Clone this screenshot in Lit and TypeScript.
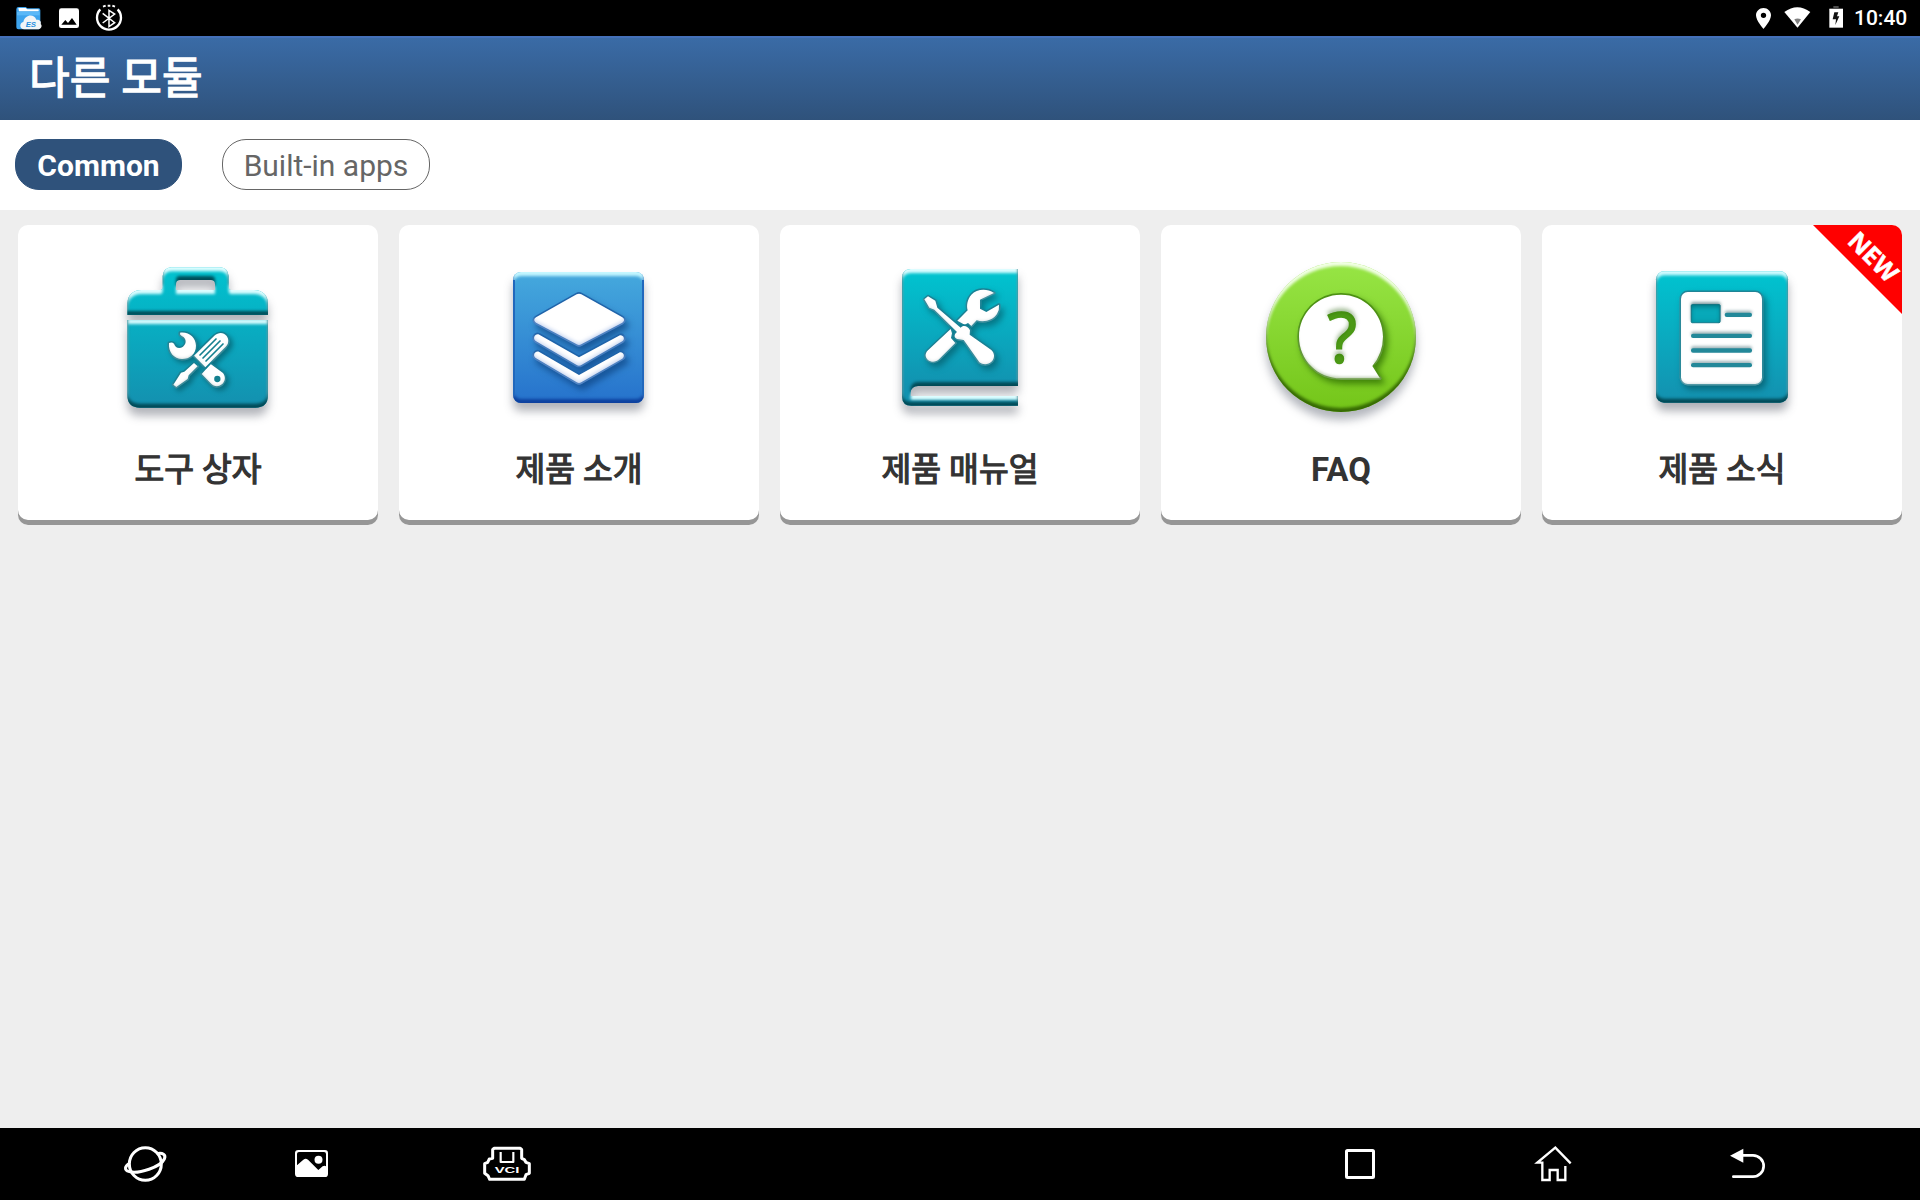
import { LitElement, html, svg, css, nothing } from "lit";
import { customElement, property } from "lit/decorators.js";

/* Bevelled look: light inner edge on top, dark inner edge at the bottom, soft drop shadow. */
const bevel = (id: string, hi: string, hiO: number, lo: string, loO: number, drop: string, dropO: number, d = 11, b = 5.5, dy = 24, db = 14, dx = 0) => svg`
  <filter id=${id} x="-30%" y="-30%" width="160%" height="170%" color-interpolation-filters="sRGB">
    <feOffset in="SourceAlpha" dx=${dx} dy=${dy} result="o" />
    <feGaussianBlur in="o" stdDeviation=${db} result="ob" />
    <feFlood flood-color=${drop} flood-opacity=${dropO} />
    <feComposite in2="ob" operator="in" result="shadow" />
    <feOffset in="SourceAlpha" dy=${d} />
    <feGaussianBlur stdDeviation=${b} result="t" />
    <feComposite in="SourceAlpha" in2="t" operator="out" result="tm" />
    <feFlood flood-color=${hi} flood-opacity=${hiO} />
    <feComposite in2="tm" operator="in" result="top" />
    <feOffset in="SourceAlpha" dy=${-d} />
    <feGaussianBlur stdDeviation=${b} result="u" />
    <feComposite in="SourceAlpha" in2="u" operator="out" result="um" />
    <feFlood flood-color=${lo} flood-opacity=${loO} />
    <feComposite in2="um" operator="in" result="bottom" />
    <feMerge>
      <feMergeNode in="shadow" /><feMergeNode in="SourceGraphic" /><feMergeNode in="top" /><feMergeNode in="bottom" />
    </feMerge>
  </filter>`;

const gradient = (id: string, y1: number, y2: number, a: string, b: string) => svg`
  <linearGradient id=${id} gradientUnits="userSpaceOnUse" x1="0" x2="0" y1=${y1} y2=${y2}>
    <stop offset="0" stop-color=${a} /><stop offset="1" stop-color=${b} />
  </linearGradient>`;

const toolbox = html`<svg width="200" height="190" viewBox="-6 0 600 570">
  <defs>
    ${bevel("base", "#dcfdff", 1, "#004652", 0.95, "#2a3040", 0.36)}
    ${bevel("tool", "#ffffff", 0, "#8ba5a8", 0.45, "#04505e", 0.6, 6, 4, 10, 8, 8)}
    ${gradient("g", 90, 500, "#00c2cf", "#1490af")}
  </defs>
  <path filter="url(#base)" fill="url(#g)" fill-rule="evenodd" d="M82 225V190Q84 152 124 150H178Q188 150 188 140V108Q190 84 214 82H360Q384 84 386 108V140Q386 150 396 150H462Q502 152 504 190V225ZM228 150H345V132Q345 120 333 120H240Q228 120 228 132ZM82 240H504V465Q504 503 466 503H120Q82 503 82 465Z" />
  <g filter="url(#tool)">
    <g fill="#fff" stroke="#147f92" stroke-width="9" stroke-linejoin="round" paint-order="stroke">
      <path d="M240 278C266 274 288 292 288 317C288 342 270 357 246 357C222 357 204 336 207 309Q216 305 222 311C226 324 238 327 249 320C261 311 259 294 246 289Q238 284 240 278Z" />
      <path d="M332 372L369 399C378 410 376 424 366 433C355 442 341 440 332 430L305 402Z" />
      <path d="M282 347L343 287C356 276 371 277 380 288C388 299 386 312 376 322L316 382Z" />
      <path d="M282 369L293 379L266 406L263 417L229 441L220 434L243 398L253 395Z" />
    </g>
    <circle cx="352" cy="417" r="9.5" fill="#14808f" />
    <path d="M300 345L348 297M309 354L360 303M318 363L369 312" stroke="#14808f" stroke-width="5" stroke-linecap="round" fill="none" />
  </g>
</svg>`;

const layers = html`<svg width="200" height="190" viewBox="-3 0 600 570">
  <defs>
    ${bevel("base", "#c4f7ff", 1, "#0c3e9c", 0.95, "#2a3040", 0.36)}
    ${bevel("tool", "#ffffff", 0, "#88a6e0", 0.6, "#0a3f7c", 0.65, 8, 6, 14, 10, 10)}
    ${gradient("g", 96, 490, "#45a9dd", "#2672cc")}
  </defs>
  <rect filter="url(#base)" x="99" y="96" width="393" height="393" rx="24" fill="url(#g)" />
  <path d="M102 120V465M489 120V465" stroke="#2168bd" stroke-width="6" fill="none" />
  <g filter="url(#tool)" stroke="#1c62a8" stroke-width="10" stroke-linejoin="round" fill="#fff" paint-order="stroke">
    <path d="M290 163Q297 159 304 163L427 232Q438 240 427 248L304 313Q297 317 290 313L168 248Q157 240 168 232Z" />
    <path d="M297 352L417 287C428 281 438 296 427 304L304 375Q297 379 290 375L167 303C156 294 166 278 178 284Z" />
    <path d="M297 405L417 338C428 332 438 347 427 356L304 427Q297 431 290 427L167 354C156 346 166 330 178 336Z" />
  </g>
</svg>`;

const manual = html`<svg width="200" height="190" viewBox="0 0 600 570">
  <defs>
    ${bevel("base", "#dcfdff", 1, "#004652", 0.95, "#2a3040", 0.36)}
    ${bevel("tool", "#ffffff", 0, "#9fb4b8", 0.4, "#04505e", 0.6, 6, 4, 11, 9, 9)}
    ${gradient("g", 90, 440, "#00c4d0", "#1292b0")}
  </defs>
  <path filter="url(#base)" fill="url(#g)" d="M474 87H152Q126 88 126 114V470Q127 497 154 497H474V468H152V458Q154 438 174 438H474Z" />
  <g filter="url(#tool)" fill="#fff" stroke="#178094" stroke-width="9" stroke-linejoin="round" paint-order="stroke">
    <path d="M402 159C380 144 350 147 334 164C322 178 319 196 323 211L292 242L314 254L324 249L334 258L350 241C374 248 400 240 411 222Q419 209 417 194L379 216L360 206V179Z" />
    <path d="M272 267L204 331C193 342 196 352 203 359C214 368 228 367 238 357L286 309L273 294L276 280Z" />
    <path d="M193 178L204 169L226 182L232 203L302 263C309 253 325 258 330 271L329 284L394 330C404 339 405 353 396 364C386 375 368 375 358 367L311 300L296 298C282 296 280 284 291 276L223 209L208 203Z" />
  </g>
</svg>`;

const faq = html`<svg width="200" height="190" viewBox="3 0 600 570">
  <defs>
    ${bevel("base", "#f2ffe6", 1, "#2f5f00", 0.9, "#2c3448", 0.36)}
    ${bevel("tool", "#ffffff", 0, "#8aa878", 0.6, "#2c6a00", 0.75, 10, 5, 12, 10, 10)}
    ${bevel("hole", "#2c6a00", 0.3, "#66c022", 0, "#1c5a00", 0.4, 5, 4, -8, 6)}
    ${gradient("g", 70, 515, "#97e545", "#74c519")}
  </defs>
  <circle filter="url(#base)" cx="303" cy="291" r="225" fill="url(#g)" />
  <path filter="url(#tool)" d="M303 164C373 164 429 220 429 290Q429 340 397 378L420 415H303C233 415 177 360 177 290S233 164 303 164Z" fill="#fff" stroke="#4d9113" stroke-width="10" stroke-linejoin="round" paint-order="stroke" />
  <text class="mark" filter="url(#hole)" x="306" y="368" text-anchor="middle">?</text>
</svg>`;

const news = html`<svg width="200" height="190" viewBox="6 90 600 570">
  <defs>
    ${bevel("base", "#d2fbff", 1, "#004652", 0.95, "#2a3040", 0.38)}
    ${bevel("tool", "#ffffff", 0, "#9db8bd", 0.5, "#04505e", 0.65, 5, 3, 12, 10, 8)}
    ${bevel("hole", "#00626e", 0.65, "#00626e", 0.2, "#06404a", 0.5, 8, 6, -6, 5)}
    ${bevel("line", "#238899", 0, "#238899", 0, "#06404a", 0.4, 4, 2, -6, 4)}
    ${gradient("g", 184, 578, "#00c4d0", "#1490af")}
  </defs>
  <rect filter="url(#base)" x="108" y="184" width="396" height="394" rx="24" fill="url(#g)" />
  <rect filter="url(#tool)" x="183" y="246" width="243" height="276" rx="20" fill="#fff" stroke="#1f8496" stroke-width="9" paint-order="stroke" />
  <rect filter="url(#hole)" x="214" y="284" width="86" height="54" rx="3" fill="#08a9b9" stroke="#1f8799" stroke-width="3" />
  <g filter="url(#line)" fill="#238899">
    <rect x="314" y="308" width="82" height="13" rx="6" />
    <rect x="213" y="371" width="183" height="13" rx="6" />
    <rect x="213" y="415" width="183" height="13" rx="6" />
    <rect x="213" y="459" width="183" height="13" rx="6" />
  </g>
</svg>`;

interface Tile { label: string; icon: unknown; fresh?: boolean; }

const TILES: Tile[] = [
  { label: "도구 상자", icon: toolbox },
  { label: "제품 소개", icon: layers },
  { label: "제품 매뉴얼", icon: manual },
  { label: "FAQ", icon: faq },
  { label: "제품 소식", icon: news, fresh: true },
];

@customElement("module-tile")
export class ModuleTile extends LitElement {
  @property({ attribute: false }) tile!: Tile;

  static styles = css`
    :host { display: block; }
    .card {
      position: relative; box-sizing: border-box; height: 300px; padding-top: 15px;
      display: flex; flex-direction: column; align-items: center;
      background: #fff; border-radius: 10px; box-shadow: inset 0 -5px 0 #969696;
    }
    svg { display: block; flex: none; overflow: visible; }
    .mark { font: 400 206px "Open Sans", sans-serif; fill: #4c9a16; stroke: #4c9a16; stroke-width: 5px; }
    .label {
      margin-top: 16px; font-size: 33px; line-height: 48px; font-weight: 700; color: #333;
      white-space: nowrap;
    }
    .cjk { font-size: 32.4px; font-weight: 400; -webkit-text-stroke: 1.2px #333; }
    .ribbon {
      position: absolute; top: 0; right: 0; width: 89px; height: 89px; background: #f00;
      border-top-right-radius: 10px; clip-path: polygon(0 0, 100% 0, 100% 100%);
    }
    .new {
      position: absolute; left: 332px; top: 31px; transform: translate(-50%, -50%) rotate(45deg);
      font: 700 25px/18px "Noto Sans", sans-serif; color: #fff; -webkit-text-stroke: 0.5px #fff;
    }
  `;

  render() {
    const { label, icon, fresh } = this.tile;
    return html`<div class="card">
      ${icon}
      <div class="label ${label === "FAQ" ? "" : "cjk"}">${label}</div>
      ${fresh ? html`<div class="ribbon"></div><span class="new">NEW</span>` : nothing}
    </div>`;
  }
}

@customElement("app-root")
export class AppRoot extends LitElement {
  static styles = css`
    :host {
      display: flex; flex-direction: column; width: 1920px; height: 1200px; overflow: hidden;
      background: #eee; font-family: Roboto, "Noto Sans CJK KR", sans-serif;
    }
    svg { display: block; flex: none; }
    .status {
      flex: none; height: 36px; background: #000; color: #fff; display: flex;
      justify-content: space-between; box-sizing: border-box; padding: 0 12px;
    }
    .side { display: flex; align-items: center; }
    .wifi { margin: 0 12px 0 6px; }
    .time { font-size: 21px; line-height: 37px; font-weight: 500; margin-left: 6px; width: 54px; white-space: nowrap; }
    .es { font: italic 700 22px "Liberation Sans", sans-serif; fill: #1e8fe0; }
    .header {
      flex: none; box-sizing: border-box; height: 84px; padding: 0 29px; color: #fff;
      border-top: 2px solid #4470b8; background: linear-gradient(#3a6ba6, #2f527b);
    }
    .title {
      margin: 0; font-size: 44.200px; line-height: 83px; font-weight: 400;
      -webkit-text-stroke: 1.3px #fff;
    }
    .tabs {
      flex: none; box-sizing: border-box; height: 90px; padding: 19px 15px 0; display: flex; gap: 40px;
      background: #fff; align-items: flex-start;
    }
    .tab {
      box-sizing: border-box; height: 51px; border: 1px solid #666; border-radius: 24px; display: flex;
      justify-content: center; font-size: 30px; line-height: 52px; color: #666; white-space: nowrap;
    }
    .tab.active { width: 167px; background: #2f527b; border-color: #2f527b; color: #fff; font-weight: 700; }
    .tab.idle { width: 208px; }
    .grid {
      flex: 1; padding: 15px 18px 0; display: grid; grid-template-columns: repeat(5, 360px);
      gap: 21px; align-content: start;
    }
    .nav {
      flex: none; box-sizing: border-box; height: 72px; padding: 0 148px 0 120px; background: #000;
      display: flex; align-items: center; justify-content: space-between;
    }
    .left { gap: 120px; }
    .vci { margin-left: 24px; }
    .vci-text { font: 700 27px "Liberation Sans", sans-serif; fill: #fff; }
    .right { gap: 146px; }
  `;

  render() {
    return html`
      <div class="status">
        <div class="side">
          <svg width="36" height="36" viewBox="36 0 108 108">
            <path d="M49 28Q49 21 56 21H77L82 25H116Q121 25 121 31V83Q121 88 115 88H55Q49 88 49 82Z" fill="#3ea4ee" />
            <path d="M55 24H77L82 28H116V34H57Z" fill="#fff" />
            <path d="M51 36H119V46H51Z" fill="#5ab8f8" />
            <path d="M73 88C58 88 57 69 70 66C74 44 102 40 109 59C122 58 124 67 122 72C129 78 122 88 113 88Z" fill="#f3f5f7" />
            <text class="es" x="77" y="82" textLength="31" lengthAdjust="spacingAndGlyphs">ES</text>
          </svg>
          <svg width="36" height="36" viewBox="144 0 108 108">
            <path fill="#fff" fill-rule="evenodd" d="M184 25H230Q237 25 237 32V77Q237 84 230 84H184Q177 84 177 77V32Q177 25 184 25ZM184 74H230L216 54L204 69L196 60Z" />
          </svg>
          <svg width="48" height="36" viewBox="252 0 144 108">
            <g fill="none" stroke="#fff">
              <path d="M301 28A36 36 0 1 0 353 28" stroke-width="7" />
              <path d="M309 20L317 17M323 17H331M337 17L345 20" stroke-width="6" />
              <path d="M308 40L344 68L327 80V31L344 42L308 69" stroke-width="4.500" />
            </g>
          </svg>
        </div>
        <div class="side">
          <svg width="24" height="36" viewBox="96 0 72 108">
            <path fill="#fff" fill-rule="evenodd" d="M130.500 24C118 24 108 34 108 46C108 62 130.500 87 130.500 87S153 62 153 46C153 34 143 24 130.500 24ZM130.500 38A8 8 0 1 1 130.500 54A8 8 0 1 1 130.500 38Z" />
          </svg>
          <svg class="wifi" width="30" height="36" viewBox="186 0 90 108">
            <path fill="#fff" d="M193 36Q232 7 271 36L232.500 83Z" />
            <path fill="#808080" d="M223 58Q232.500 53 243 58L232.500 74Z" />
          </svg>
          <svg width="24" height="36" viewBox="312 0 72 108">
            <path fill="#4d4d4d" d="M340 18H356V24H369V31H328V24H340Z" />
            <path fill="#fff" d="M328 27H369V83H328Z" />
            <path fill="#111" d="M343 37H355L351 49H358L346 75L348 58H338Z" />
          </svg>
          <div class="time">10:40</div>
        </div>
      </div>
      <header class="header"><h1 class="title">다른 모듈</h1></header>
      <nav class="tabs">
        <div class="tab active">Common</div>
        <div class="tab idle">Built-in apps</div>
      </nav>
      <main class="grid">${TILES.map((t) => html`<module-tile .tile=${t}></module-tile>`)}</main>
      <footer class="nav">
        <div class="side left">
          <svg width="48" height="48" viewBox="90 60 144 144">
            <g fill="none" stroke="#fff" stroke-width="9">
              <ellipse cx="166" cy="132" rx="48" ry="49" />
              <path d="M200 101C218 97 229 104 223 117C212 141 147 162 118 155C101 151 104 138 119 130" />
            </g>
          </svg>
          <svg width="48" height="48" viewBox="594 60 144 144">
            <path fill="#fff" fill-rule="evenodd" d="M625 90H705Q714 90 714 99V161Q714 171 705 171H625Q615 171 615 161V99Q615 90 625 90ZM627 96Q621 96 621 102V136L640 119Q647 113 654 119L685 150L698 139Q704 135 708 139V102Q708 96 702 96Z" />
            <circle cx="685.500" cy="119" r="12" fill="#fff" />
          </svg>
          <svg class="vci" width="54" height="48" viewBox="1170 60 162 144">
            <g fill="none" stroke="#fff" stroke-linejoin="round">
              <path stroke-width="9" d="M1212 85H1291L1295 89V115L1303 119L1308 127L1318 131V160L1308 164L1303 178H1199L1194 167L1184 160V131L1193 127L1198 117L1208 115V89Z" />
              <path stroke-width="6.500" d="M1232 96V126H1270V96" />
            </g>
            <text class="vci-text" x="1214" y="160" textLength="74" lengthAdjust="spacingAndGlyphs">VCI</text>
          </svg>
        </div>
        <div class="side right">
          <svg width="48" height="48" viewBox="78 60 144 144">
            <rect x="109.500" y="91.500" width="81" height="81" rx="3" fill="none" stroke="#fff" stroke-width="9" />
          </svg>
          <svg width="48" height="48" viewBox="660 60 144 144">
            <path fill="none" stroke="#fff" stroke-width="7" d="M782 130L736 83L682 128H697V180H719V150H743V180H766V138" />
          </svg>
          <svg width="48" height="48" viewBox="1242 60 144 144">
            <path fill="none" stroke="#fff" stroke-width="8" stroke-linecap="round" d="M1296 106H1329A32 32 0 0 1 1329 170H1270" />
            <path fill="#fff" d="M1260 107L1300 86V128Z" />
          </svg>
        </div>
      </footer>
    `;
  }
}
